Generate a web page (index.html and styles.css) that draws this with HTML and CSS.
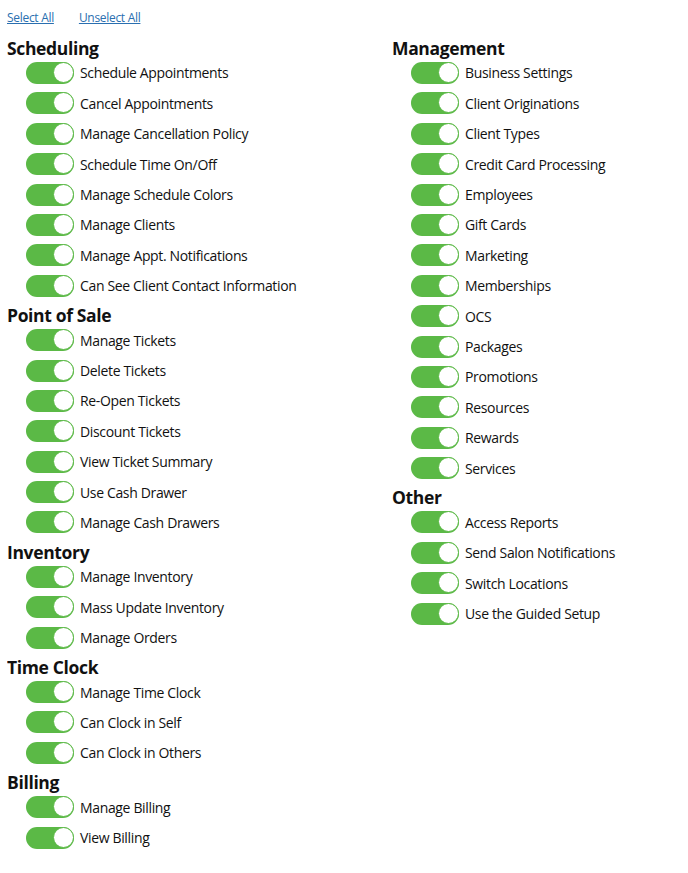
FILE: index.html
```html
<!DOCTYPE html>
<html>
<head>
<meta charset="utf-8">
<link rel="stylesheet" href="styles.css">
</head>
<body>
<div class="links"><a href="#">Select All</a><a href="#">Unselect All</a></div>
<div class="cols">
  <div class="col">
    <h2>Scheduling</h2>
    <div class="row"><span class="tg"></span>Schedule Appointments</div>
    <div class="row"><span class="tg"></span>Cancel Appointments</div>
    <div class="row"><span class="tg"></span>Manage Cancellation Policy</div>
    <div class="row"><span class="tg"></span>Schedule Time On/Off</div>
    <div class="row"><span class="tg"></span>Manage Schedule Colors</div>
    <div class="row"><span class="tg"></span>Manage Clients</div>
    <div class="row"><span class="tg"></span>Manage Appt. Notifications</div>
    <div class="row"><span class="tg"></span>Can See Client Contact Information</div>
    <h2>Point of Sale</h2>
    <div class="row"><span class="tg"></span>Manage Tickets</div>
    <div class="row"><span class="tg"></span>Delete Tickets</div>
    <div class="row"><span class="tg"></span>Re-Open Tickets</div>
    <div class="row"><span class="tg"></span>Discount Tickets</div>
    <div class="row"><span class="tg"></span>View Ticket Summary</div>
    <div class="row"><span class="tg"></span>Use Cash Drawer</div>
    <div class="row"><span class="tg"></span>Manage Cash Drawers</div>
    <h2>Inventory</h2>
    <div class="row"><span class="tg"></span>Manage Inventory</div>
    <div class="row"><span class="tg"></span>Mass Update Inventory</div>
    <div class="row"><span class="tg"></span>Manage Orders</div>
    <h2>Time Clock</h2>
    <div class="row"><span class="tg"></span>Manage Time Clock</div>
    <div class="row"><span class="tg"></span>Can Clock in Self</div>
    <div class="row"><span class="tg"></span>Can Clock in Others</div>
    <h2>Billing</h2>
    <div class="row"><span class="tg"></span>Manage Billing</div>
    <div class="row"><span class="tg"></span>View Billing</div>
  </div>
  <div class="col">
    <h2>Management</h2>
    <div class="row"><span class="tg"></span>Business Settings</div>
    <div class="row"><span class="tg"></span>Client Originations</div>
    <div class="row"><span class="tg"></span>Client Types</div>
    <div class="row"><span class="tg"></span>Credit Card Processing</div>
    <div class="row"><span class="tg"></span>Employees</div>
    <div class="row"><span class="tg"></span>Gift Cards</div>
    <div class="row"><span class="tg"></span>Marketing</div>
    <div class="row"><span class="tg"></span>Memberships</div>
    <div class="row"><span class="tg"></span>OCS</div>
    <div class="row"><span class="tg"></span>Packages</div>
    <div class="row"><span class="tg"></span>Promotions</div>
    <div class="row"><span class="tg"></span>Resources</div>
    <div class="row"><span class="tg"></span>Rewards</div>
    <div class="row"><span class="tg"></span>Services</div>
    <h2>Other</h2>
    <div class="row"><span class="tg"></span>Access Reports</div>
    <div class="row"><span class="tg"></span>Send Salon Notifications</div>
    <div class="row"><span class="tg"></span>Switch Locations</div>
    <div class="row"><span class="tg"></span>Use the Guided Setup</div>
  </div>
</div>
</body>
</html>
```
FILE: styles.css
```css
body {
  margin: 8px 7px;
  font-family: "Open Sans", "Liberation Sans", sans-serif;
  color: #111;
  background: #fff;
}
.links {
  display: flex;
  gap: 25px;
  height: 20px;
  line-height: 20px;
  font-size: 12px;
  letter-spacing: -0.3px;
}
.links a {
  color: #2a6fb0;
  text-decoration: underline;
}
.cols {
  display: grid;
  grid-template-columns: 385px auto;
  margin-top: 5.8px;
}
h2 {
  margin: 0;
  padding-top: 4px;
  font-size: 17.5px;
  letter-spacing: -0.35px;
  line-height: 20px;
  font-weight: 700;
  color: #111;
}
.row {
  display: flex;
  align-items: center;
  height: 30.4px;
  padding-left: 19px;
  font-size: 14px;
  letter-spacing: -0.35px;
}
.tg {
  position: relative;
  width: 48px;
  height: 22px;
  border-radius: 11px;
  background: #5bb946;
  margin-right: 6px;
  flex: none;
}
.tg::after {
  content: "";
  position: absolute;
  right: 0;
  top: 0;
  width: 19px;
  height: 19px;
  border-radius: 50%;
  background: #fff;
  border: 1.5px solid #5bb946;
}
```
